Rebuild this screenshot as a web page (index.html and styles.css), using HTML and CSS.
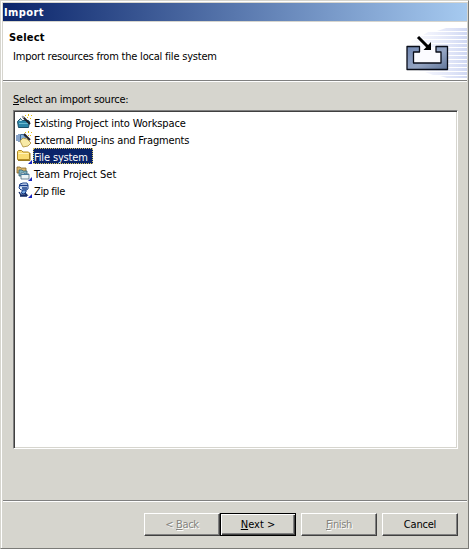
FILE: index.html
```html
<!DOCTYPE html>
<html lang="en">
<head>
<meta charset="utf-8">
<title>Import</title>
<link rel="stylesheet" href="styles.css">
</head>
<body>
<main class="dialog">
  <div class="titlebar"><span class="t-import">Import</span></div>
  <header class="banner">
    <div class="heading">
      <h1><span class="t-select">Select</span></h1>
      <p><span class="t-desc">Import resources from the local file system</span></p>
    </div>
    <svg class="art" width="107" height="58" viewBox="360 22 107 58">
      <defs>
        <linearGradient id="fade" gradientUnits="userSpaceOnUse" x1="405" x2="467" y1="0" y2="0"><stop offset="0" stop-color="#e6e9fa" stop-opacity="0"/><stop offset=".5" stop-color="#e3e7f9" stop-opacity=".7"/><stop offset="1" stop-color="#d0d8f3"/></linearGradient>
        <linearGradient id="tray" x1="0" x2="1" y2="1"><stop offset="0" stop-color="#6f86b2"/><stop offset=".55" stop-color="#94a4c2"/><stop offset="1" stop-color="#5f7499"/></linearGradient>
      </defs>
      <path fill="url(#fade)" d="M446 28h21v3h-30zM428 32h39v3h-44zM419 36h48v3h-52zM412 40h55v3h-57zM408 44h59v3h-61zM405 48h62v3h-63zM404 52h63v3h-63zM404 56h63v3h-62zM406 60h61v3h-59zM409 64h58v3h-55zM415 68h52v3h-47zM425 72h42v3h-34zM440 76h27v2h-20z"/>
      <path fill="#fbfbff" d="M414 47h27v16h-27z"/>
      <path fill="url(#tray)" stroke="#080c18" stroke-width="1.3" stroke-linejoin="round" d="M407 46.500000h12.500000v5.500000h-6v11h27.500000v-11h-5v-5.500000h11.500000v23H407z"/>
      <path d="M418 37l10 10" stroke="#000" stroke-width="3"/>
      <path d="M431 50h-7.500000l7.500000-8z"/>
    </svg>
  </header>
  <section class="content">
    <div class="label"><span class="t-source"><u>S</u>elect an import source:</span></div>
    <ul class="list">
      <li>
        <svg width="17" height="17" viewBox="0 0 17 17"><path d="M1.500000 7.500000l3-3 2 2h6l1 1-1 6h-10z" fill="#2d86a8" stroke="#1c4f69"/><path d="M3 7l2-2 1 2z" fill="#d4eef2"/><path d="M3 9.500000h9" stroke="#6cbcd2"/><path d="M7 3l7 7" stroke="#23232b" stroke-width="2"/><path d="M6 2l2 2" stroke="#9aa0a8" stroke-width="1.500000"/><path d="M9 1h1v1H9zM12 0h1v2h-1zM15 1h1v1h-1zM11 3h1v1h-1zM14 4h1v1h-1z" fill="#e0bd10"/></svg>
        <span class="name t-existing">Existing Project into Workspace</span>
      </li>
      <li>
        <svg width="17" height="17" viewBox="0 0 17 17"><path d="M1 4v6M3 3v8" stroke="#4773ad" stroke-width="1.300000"/><path d="M4.500000 3.500000h3l2 3-2 4h-3z" fill="#86b0da" stroke="#3c6796"/><path d="M4 10l3-3 4 1 4 4-3 3-5 1z" fill="#f8eaa6" stroke="#a98a34" stroke-width=".8"/><path d="M8 3l6 6" stroke="#23232b" stroke-width="2"/><path d="M9 1h1v1H9zM12 0h1v2h-1zM15 1h1v1h-1zM12 4h1v1h-1zM14 4h1v1h-1z" fill="#e0bd10"/></svg>
        <span class="name t-external">External Plug-ins and Fragments</span>
      </li>
      <li>
        <svg width="17" height="17" viewBox="0 0 17 17"><path d="M1.500000 11.500000v-8l1-1h3l1.500000 1.500000h5.500000l1 1v6.500000z" fill="#f9dc74" stroke="#b18a25"/><path d="M2.500000 5.500000h10" stroke="#fff3bb"/><path d="M2 12.500000h12V5" fill="none" stroke="#9c7c25"/><path d="M16 12v4h-4z" fill="#1824bd"/></svg>
        <span class="name selected"><span class="t-file">File system</span></span>
      </li>
      <li>
        <svg width="17" height="17" viewBox="0 0 17 17"><path d="M1 2h3l1 1h5v5H1z" fill="#deb766" stroke="#84642f" stroke-width=".8"/><path d="M3 5h3l1 1h4v5H3z" fill="#80b2bd" stroke="#395f70" stroke-width=".8"/><path d="M5 8h3l1 1h4v5H5z" fill="#eef4f5" stroke="#4b6b82" stroke-width=".8"/><path d="M5 9.500000h8" stroke="#467b9e"/><path d="M16 12v4h-4z" fill="#1824bd"/></svg>
        <span class="name t-team">Team Project Set</span>
      </li>
      <li>
        <svg width="17" height="17" viewBox="0 0 17 17"><path d="M4 2l3-1h4l1 2v4l-2 1H5L3 6z" fill="#dbe8fa" stroke="#163d8a"/><path d="M3 3.500000h9M6 6h5" stroke="#183b87" stroke-width="1.500000"/><path d="M7 8h3v2l-2 2-3-1z" fill="#78a8df" stroke="#163d8a"/><path d="M3 10l2 3h6l-2-2M4 14h7" fill="none" stroke="#152c67" stroke-width="1.300000"/><path d="M16 12v4h-4z" fill="#1824bd"/></svg>
        <span class="name t-zip">Zip file</span>
      </li>
    </ul>
  </section>
  <footer class="actions">
    <button class="btn" disabled><span class="t-back">&lt; <u>B</u>ack</span></button>
    <button class="btn default"><span class="t-next"><u>N</u>ext &gt;</span></button>
    <button class="btn finish" disabled><span class="t-finish"><u>F</u>inish</span></button>
    <button class="btn"><span class="t-cancel">Cancel</span></button>
  </footer>
</main>
</body>
</html>
```
FILE: styles.css
```css
* { box-sizing: border-box; }
body {
  margin: 0;
  width: 469px;
  height: 549px;
  overflow: hidden;
  background: #d6d5ce;
  color: #000;
  font: 11px/14px "DejaVu Sans Condensed", "DejaVu Sans", sans-serif;
  font-stretch: condensed;
}
.dialog {
  width: 469px;
  height: 549px;
  display: flex;
  flex-direction: column;
  border: 1px solid #d6d5ce;
  border-right-color: #7b7b78;
  border-bottom-color: #7b7b78;
  box-shadow: inset 1px 1px #fff;
  padding: 2px 1px 0 2px;
}
.titlebar {
  height: 18px;
  padding: 3px 0 0 1px;
  color: #fff;
  font-weight: bold;
  background: linear-gradient(90deg, #0a246a, #a6caf0);
}
.banner {
  height: 60px;
  margin-top: 1px;
  display: flex;
  justify-content: space-between;
  background: #fff;
  border-bottom: 1px solid #fff;
  box-shadow: inset 0 -1px #808080;
}
.heading { padding-left: 6px; }
h1, p { margin: 0; font-size: 11px; line-height: 14px; }
h1 { margin-top: 9px; }
p { margin: 5px 0 0 4px; }
.content { height: 418px; padding: 11px 9px 0 10px; }
.label { height: 17px; white-space: nowrap; }
.list {
  list-style: none;
  margin: 0;
  height: 339px;
  padding: 3px 0 0 2px;
  background: #fff;
  border: 1px solid;
  border-color: #808080 #fff #fff #808080;
  box-shadow: inset 1px 1px #404040, inset -1px -1px #d6d5ce;
}
.list li { display: flex; height: 17px; }
.list svg { flex: none; }
.name { height: 16px; padding: 3px 0 0 1px; line-height: 13px; white-space: nowrap; }
.selected {
  width: 60px;
  background: #0a246a;
  color: #fff;
  outline: 1px dotted #d8c65f;
  outline-offset: -1px;
}
.actions {
  height: 48px;
  display: flex;
  justify-content: flex-end;
  padding: 12px 9px 0 0;
  border-top: 1px solid #808080;
  box-shadow: inset 0 1px #fff;
}
.btn {
  width: 76px;
  height: 23px;
  padding: 0;
  border: 1px solid;
  border-color: #fff #404040 #404040 #fff;
  box-shadow: inset -1px -1px #808080;
  border-radius: 0;
  background: #d6d5ce;
  color: #000;
  font: inherit;
  white-space: nowrap;
}
.btn:disabled { color: #85847e; text-shadow: 1px 1px #fff; }
.btn.default {
  border-color: #000;
  box-shadow: inset 1px 1px #fff, inset -1px -1px #404040, inset -2px -2px #808080;
}
.finish { margin: 0 5px; }
u { text-underline-offset: 1px; text-decoration-thickness: 1px; }
.t-import { letter-spacing: .4px; }
.t-select { letter-spacing: .2px; }
.t-desc { letter-spacing: -.21px; }
.t-source { letter-spacing: -.24px; }
.t-existing { letter-spacing: -.12px; }
.t-external { letter-spacing: -.17px; }
.t-file { letter-spacing: -.15px; }
.t-zip { letter-spacing: -.4px; }
.t-back, .t-finish { letter-spacing: -.35px; }
.t-cancel { letter-spacing: -.2px; }
```
